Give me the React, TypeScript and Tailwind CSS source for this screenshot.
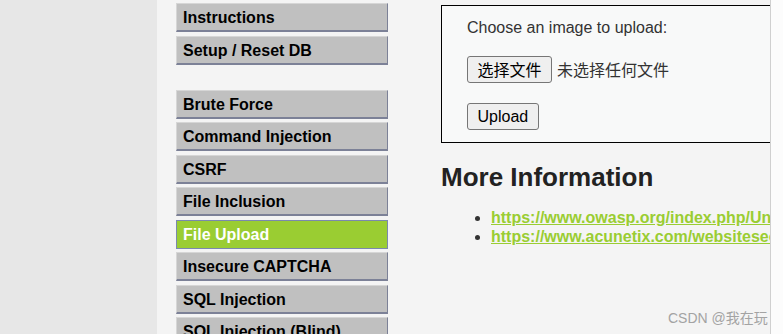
const topLinks = ["Instructions", "Setup / Reset DB"];

const vulnLinks = [
  "Brute Force",
  "Command Injection",
  "CSRF",
  "File Inclusion",
  "File Upload",
  "Insecure CAPTCHA",
  "SQL Injection",
  "SQL Injection (Blind)",
];

function MenuItem({ label, selected }: { label: string; selected?: boolean }) {
  return (
    <li className="mb-[3.5px]">
      <a
        href="#"
        className={
          selected
            ? "block h-[29px] border border-[#7b89ad] bg-[#9acd32] pl-[6px] pt-[1px] text-[16px] font-bold leading-[26px] text-white"
            : "block h-[29px] border-t border-l border-r-[1.5px] border-b-2 border-t-[#d6d6d6] border-l-[#d6d6d6] border-r-[#7c8197] border-b-[#7c8197] bg-[#c0c0c0] pl-[6px] pt-[1px] text-[16px] font-bold leading-[25px] text-black"
        }
      >
        {label}
      </a>
    </li>
  );
}

export default function App() {
  return (
    <div className="flex h-[334px] w-[783px] overflow-hidden bg-[#fcfcfc] font-['Liberation_Sans',Arial,sans-serif]">
      <div className="w-[157px] shrink-0 bg-[#e7e7e7]" />
      <div className="relative flex w-[614px] shrink-0 overflow-hidden border-r border-[#d0d0d0] bg-[#f4f4f4] pl-[19px] pt-[3px]">
        <nav className="w-[212px] shrink-0">
          {/* li margin collapses into this one, so it carries the full gap */}
          <ul className="mb-[25px]">
            {topLinks.map((l) => (
              <MenuItem key={l} label={l} />
            ))}
          </ul>
          <ul>
            {vulnLinks.map((l) => (
              <MenuItem key={l} label={l} selected={l === "File Upload"} />
            ))}
          </ul>
        </nav>

        <main className="ml-[53px] w-[520px] shrink-0 pt-[2px]">
          <div className="border border-black bg-[#f8f9f9] pb-[12px] pl-[25px] pt-[12.5px] text-[16px] text-[#333]">
            <p className="leading-[18px]">Choose an image to upload:</p>
            <div className="mt-[19.5px] flex items-center font-['Noto_Sans_CJK_SC','Liberation_Sans',sans-serif]">
              <button className="h-[27px] rounded-[3px] border border-[#767676] bg-[#efefef] px-[9.5px] text-[16px] leading-[19px] text-black">
                选择文件
              </button>
              <span className="ml-[5px] leading-[19px]">未选择任何文件</span>
            </div>
            <button className="mt-[20px] h-[27px] rounded-[3px] border border-[#767676] bg-[#efefef] px-[9.5px] text-[16px] leading-[19px] text-black">
              Upload
            </button>
          </div>

          <h2 className="mt-[19px] text-[26px] font-bold leading-[30px] text-[#222]">More Information</h2>
          <ul className="mt-[16px] list-disc pl-[50px] text-[16px] font-bold text-[#333]">
            <li className="h-[19px] leading-[19px]">
              <a href="#" className="whitespace-nowrap text-[#9acd32] underline">
                https://www.owasp.org/index.php/Unrestricted_File_Upload
              </a>
            </li>
            <li className="h-[19px] leading-[19px]">
              <a href="#" className="whitespace-nowrap text-[#9acd32] underline">
                https://www.acunetix.com/websitesecurity/upload-forms-threat/
              </a>
            </li>
          </ul>
        </main>

        <span className="absolute left-[511px] top-[308px] whitespace-nowrap font-['Liberation_Sans','Noto_Sans_CJK_SC',sans-serif] text-[14px] text-[#a3a3a3]">
          CSDN @我在玩
        </span>
      </div>
    </div>
  );
}
